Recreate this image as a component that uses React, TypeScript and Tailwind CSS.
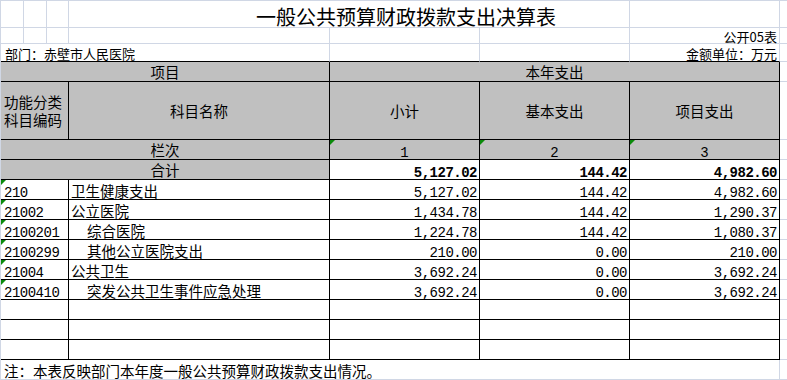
import React from "react"
import { clsx } from "clsx"

const CJK = "font-['Noto_Sans_CJK_SC','Noto_Sans',sans-serif]"
const MONO = "font-['Liberation_Mono','Noto_Sans_CJK_SC',monospace]"

type Row = {
  code: string
  name: string
  sub?: boolean
  total: string
  basic: string
  project: string
}

const rows: Row[] = [
  { code: "210", name: "卫生健康支出", total: "5,127.02", basic: "144.42", project: "4,982.60" },
  { code: "21002", name: "公立医院", total: "1,434.78", basic: "144.42", project: "1,290.37" },
  { code: "2100201", name: "综合医院", sub: true, total: "1,224.78", basic: "144.42", project: "1,080.37" },
  { code: "2100299", name: "其他公立医院支出", sub: true, total: "210.00", basic: "0.00", project: "210.00" },
  { code: "21004", name: "公共卫生", total: "3,692.24", basic: "0.00", project: "3,692.24" },
  { code: "2100410", name: "突发公共卫生事件应急处理", sub: true, total: "3,692.24", basic: "0.00", project: "3,692.24" },
]

// excel's little green "number stored as text" marker
function Flag() {
  return <span className="absolute left-0 top-0 h-0 w-0 border-t-[5px] border-r-[5px] border-t-[#0a8a0a] border-r-transparent" />
}

function Cell({ w, gray, className, children }: { w: string; gray?: boolean; className?: string; children?: React.ReactNode }) {
  return (
    <div className={clsx("relative flex h-full shrink-0 border-r border-b border-black", w, gray ? "bg-[#c0c0c0]" : "bg-white", className)}>
      {children}
    </div>
  )
}

function Strip() {
  return <div className="h-full flex-1 border-b border-[#d0d7e5]" />
}

function Num({ w, children, bold }: { w: string; children?: React.ReactNode; bold?: boolean }) {
  return (
    <Cell w={w} className="items-end justify-end pr-[2px]">
      <span className={clsx(MONO, "text-[14px] leading-[12px] tracking-[-0.5px]", bold && "font-bold")}>{children}</span>
    </Cell>
  )
}

export default function App() {
  return (
    <div className={clsx("h-[380px] w-[787px] overflow-hidden border-l border-[#d0d7e5] bg-white text-black", CJK)}>
      {/* title */}
      <div className="flex h-[28px] border-y border-[#d0d7e5]">
        <div className="h-full w-[23px] shrink-0 border-r border-[#d0d7e5]" />
        <div className="h-full w-[23px] shrink-0 border-r border-[#d0d7e5]" />
        <div className="h-full w-[22px] shrink-0 border-r border-[#d0d7e5]" />
        <div className="flex h-full w-[561px] shrink-0 items-start border-r border-[#d0d7e5] pl-[187px] pt-[6px]">
          <span className="text-[20px] leading-[20px] whitespace-nowrap">一般公共预算财政拨款支出决算表</span>
        </div>
        <div className="h-full w-[150px] shrink-0 border-r border-[#d0d7e5]" />
        <div className="flex-1" />
      </div>

      <div className="flex h-[16px] border-b border-[#d0d7e5]">
        <div className="h-full w-[23px] shrink-0 border-r border-[#d0d7e5]" />
        <div className="h-full w-[23px] shrink-0 border-r border-[#d0d7e5]" />
        <div className="h-full w-[22px] shrink-0 border-r border-[#d0d7e5]" />
        <div className="h-full w-[261px] shrink-0 border-r border-[#d0d7e5]" />
        <div className="h-full w-[150px] shrink-0 border-r border-[#d0d7e5]" />
        <div className="h-full w-[150px] shrink-0 border-r border-[#d0d7e5]" />
        <div className="flex h-full w-[150px] shrink-0 items-end justify-end border-r border-[#d0d7e5] pr-[2px]">
          <span className="block h-[13px] text-[13px] leading-[13px]">公开05表</span>
        </div>
        <div className="flex-1" />
      </div>

      <div className="flex h-[18px]">
        <div className="flex h-full w-[329px] shrink-0 items-end border-r border-b border-r-[#d0d7e5] border-b-black pl-[4px] pb-[1px]">
          <span className="block h-[13px] text-[13px] leading-[13px] whitespace-nowrap">部门：赤壁市人民医院</span>
        </div>
        <div className="h-full w-[150px] shrink-0 border-r border-b border-r-[#d0d7e5] border-b-black" />
        <div className="h-full w-[150px] shrink-0 border-r border-b border-r-[#d0d7e5] border-b-black" />
        <div className="flex h-full w-[150px] shrink-0 items-end justify-end border-r border-b border-r-[#d0d7e5] border-b-black pr-[2px] pb-[1px]">
          <span className="block h-[13px] text-[13px] leading-[13px] whitespace-nowrap">金额单位：万元</span>
        </div>
        <Strip />
      </div>

      {/* header */}
      <div className="flex h-[20px] text-[14.5px]">
        <Cell w="w-[329px]" gray className="items-center justify-center leading-[15px]">项目</Cell>
        <Cell w="w-[450px]" gray className="items-center justify-center leading-[15px]">本年支出</Cell>
        <Strip />
      </div>

      <div className="flex h-[58px] text-[14.5px]">
        <Cell w="w-[68px]" gray className="flex-col justify-center pl-[3px]">
          <span className="block h-[18px] leading-[18px]">功能分类</span>
          <span className="block h-[18px] leading-[18px]">科目编码</span>
        </Cell>
        <Cell w="w-[261px]" gray className="items-center justify-center leading-[15px]">科目名称</Cell>
        <Cell w="w-[150px]" gray className="items-center justify-center leading-[15px]">小计</Cell>
        <Cell w="w-[150px]" gray className="items-center justify-center leading-[15px]">基本支出</Cell>
        <Cell w="w-[150px]" gray className="items-center justify-center leading-[15px]">项目支出</Cell>
        <Strip />
      </div>

      <div className="flex h-[20px] text-[14.5px]">
        <Cell w="w-[329px]" gray className="items-center justify-center leading-[15px]">栏次</Cell>
        {["1", "2", "3"].map((n) => (
          <Cell key={n} w="w-[150px]" gray className="items-end justify-center">
            <Flag />
            <span className={clsx(MONO, "text-[14px] leading-[12px]")}>{n}</span>
          </Cell>
        ))}
        <Strip />
      </div>

      <div className="flex h-[20px] text-[14.5px]">
        <Cell w="w-[329px]" gray className="items-center justify-center leading-[15px]">合计</Cell>
        <Num w="w-[150px]" bold>5,127.02</Num>
        <Num w="w-[150px]" bold>144.42</Num>
        <Num w="w-[150px]" bold>4,982.60</Num>
        <Strip />
      </div>

      {/* body */}
      {rows.map((r) => (
        <div key={r.code} className="flex h-[20px] text-[14.5px]">
          <Cell w="w-[68px]" className="items-end pl-[3px]">
            <Flag />
            <span className={clsx(MONO, "text-[14px] leading-[12px] tracking-[-0.5px]")}>{r.code}</span>
          </Cell>
          <Cell w="w-[261px]" className={clsx("items-end pb-[1px] leading-[15px] whitespace-nowrap", r.sub ? "pl-[18px]" : "pl-[2px]")}>
            {r.name}
          </Cell>
          <Num w="w-[150px]">{r.total}</Num>
          <Num w="w-[150px]">{r.basic}</Num>
          <Num w="w-[150px]">{r.project}</Num>
          <Strip />
        </div>
      ))}

      {[0, 1, 2].map((i) => (
        <div key={i} className="flex h-[20px]">
          <Cell w="w-[68px]" />
          <Cell w="w-[261px]" />
          <Cell w="w-[150px]" />
          <Cell w="w-[150px]" />
          <Cell w="w-[150px]" />
          <Strip />
        </div>
      ))}

      <div className="flex h-[20px] border-b border-[#d0d7e5]">
        <div className="flex h-full w-[779px] shrink-0 items-end border-r border-[#d0d7e5] pl-[3px] pb-[1px]">
          <span className="text-[14.5px] leading-[15px] whitespace-nowrap">注：本表反映部门本年度一般公共预算财政拨款支出情况。</span>
        </div>
        <div className="flex-1" />
      </div>
    </div>
  )
}
